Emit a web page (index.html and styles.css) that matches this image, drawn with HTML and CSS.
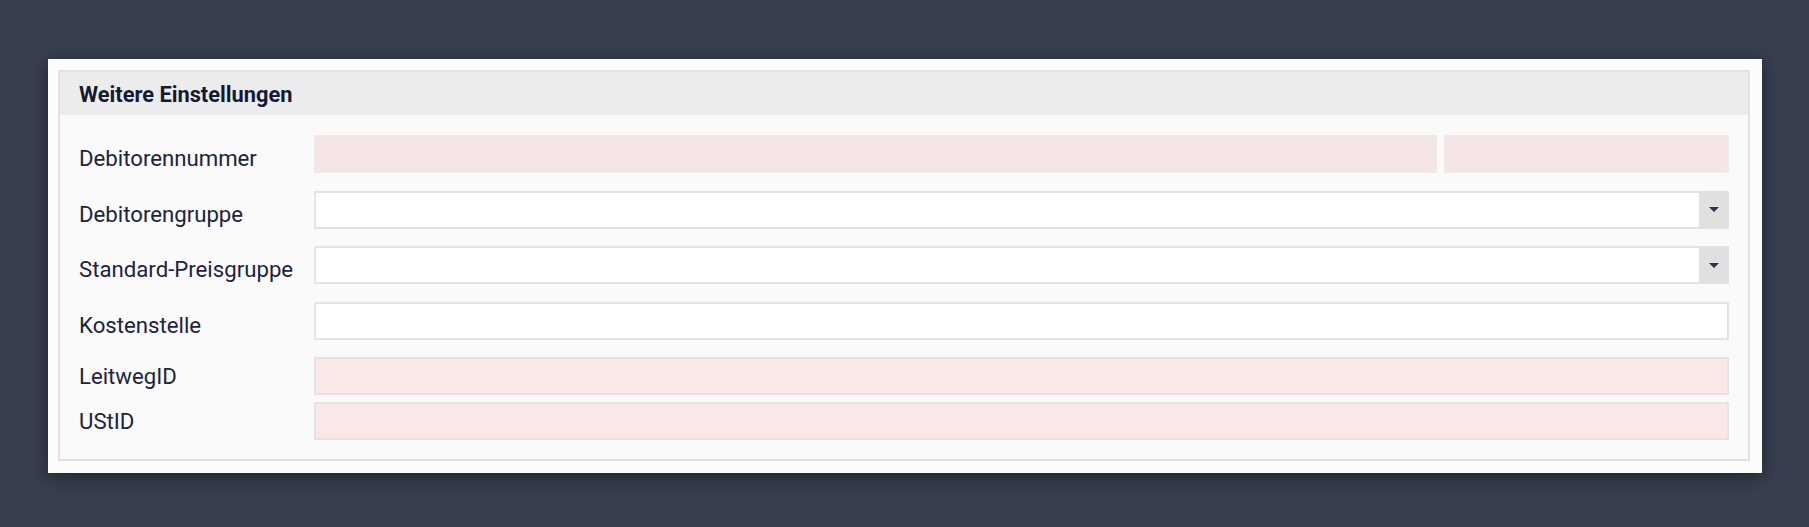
FILE: index.html
```html
<!DOCTYPE html>
<html lang="de">
<head>
<meta charset="utf-8">
<title>Weitere Einstellungen</title>
<link rel="stylesheet" href="styles.css">
</head>
<body>
<div class="card">
  <div class="panel">
    <div class="panel-head">Weitere Einstellungen</div>
    <div class="panel-body">
      <div class="row">
        <label class="label">Debitorennummer</label>
        <div class="controls split">
          <div class="input pink wide"></div>
          <div class="input pink narrow"></div>
        </div>
      </div>
      <div class="row">
        <label class="label">Debitorengruppe</label>
        <div class="controls">
          <div class="input select"><span class="select-btn"><span class="caret"></span></span></div>
        </div>
      </div>
      <div class="row">
        <label class="label">Standard-Preisgruppe</label>
        <div class="controls">
          <div class="input select"><span class="select-btn"><span class="caret"></span></span></div>
        </div>
      </div>
      <div class="row">
        <label class="label">Kostenstelle</label>
        <div class="controls">
          <div class="input"></div>
        </div>
      </div>
      <div class="group">
        <div class="row centered">
          <label class="label">LeitwegID</label>
          <div class="controls">
            <div class="input pink2"></div>
          </div>
        </div>
        <div class="row centered">
          <label class="label">UStID</label>
          <div class="controls">
            <div class="input pink2"></div>
          </div>
        </div>
      </div>
    </div>
  </div>
</div>
</body>
</html>
```
FILE: styles.css
```css
* { box-sizing: border-box; }
html, body { margin: 0; padding: 0; }
body {
  background: #383f4e;
  font-family: Roboto, "Liberation Sans", Arial, sans-serif;
  color: #1d2340;
  width: 1809px;
  height: 527px;
  padding: 59px 47px 0 48px;
}
.card {
  background: #fcfcfc;
  padding: 11px 12px 12px 10px;
  box-shadow: 0 4px 18px rgba(10, 14, 24, 0.55);
  width: 1714px;
}
.panel {
  border: 2px solid #e2e2e2;
  background: #fafafa;
}
.panel-head {
  background: #ececec;
  height: 43px;
  padding: 2px 0 0 19px;
  display: flex;
  align-items: center;
  font-weight: 700;
  font-size: 21.8px;
  color: #141a33;
}
.panel-body {
  padding: 20px 19px 19px 19px;
  display: flex;
  flex-direction: column;
  gap: 17.5px;
}
.group {
  display: flex;
  flex-direction: column;
  gap: 7px;
  margin-top: 0;
}
.row {
  display: flex;
  align-items: center;
  height: 38px;
}
.label {
  width: 235px;
  flex: none;
  font-size: 22.2px;
  padding-top: 8px;
  color: #1d2340;
  white-space: nowrap;
}
.row.centered .label { padding-top: 0; }
.controls {
  flex: 1;
  display: flex;
  height: 38px;
}
.controls.split { gap: 7px; }
.input {
  flex: 1;
  height: 38px;
  border: 2px solid #e4e4e4;
  background: #ffffff;
  position: relative;
}
.input.pink {
  background: #f5e5e5;
  border-color: #f1e8e8;
}
.input.pink2 {
  background: #fae8e8;
  border-color: #e6e2e2;
}
.input.wide { flex: none; width: 1123px; }
.input.narrow { flex: 1; }
.select-btn {
  position: absolute;
  right: -2px;
  top: -2px;
  bottom: -2px;
  width: 30px;
  background: #e0e0e0;
  display: flex;
  align-items: center;
  justify-content: center;
}
.caret {
  width: 0;
  height: 0;
  border-left: 5px solid transparent;
  border-right: 5px solid transparent;
  border-top: 5px solid #2a3048;
}
```
